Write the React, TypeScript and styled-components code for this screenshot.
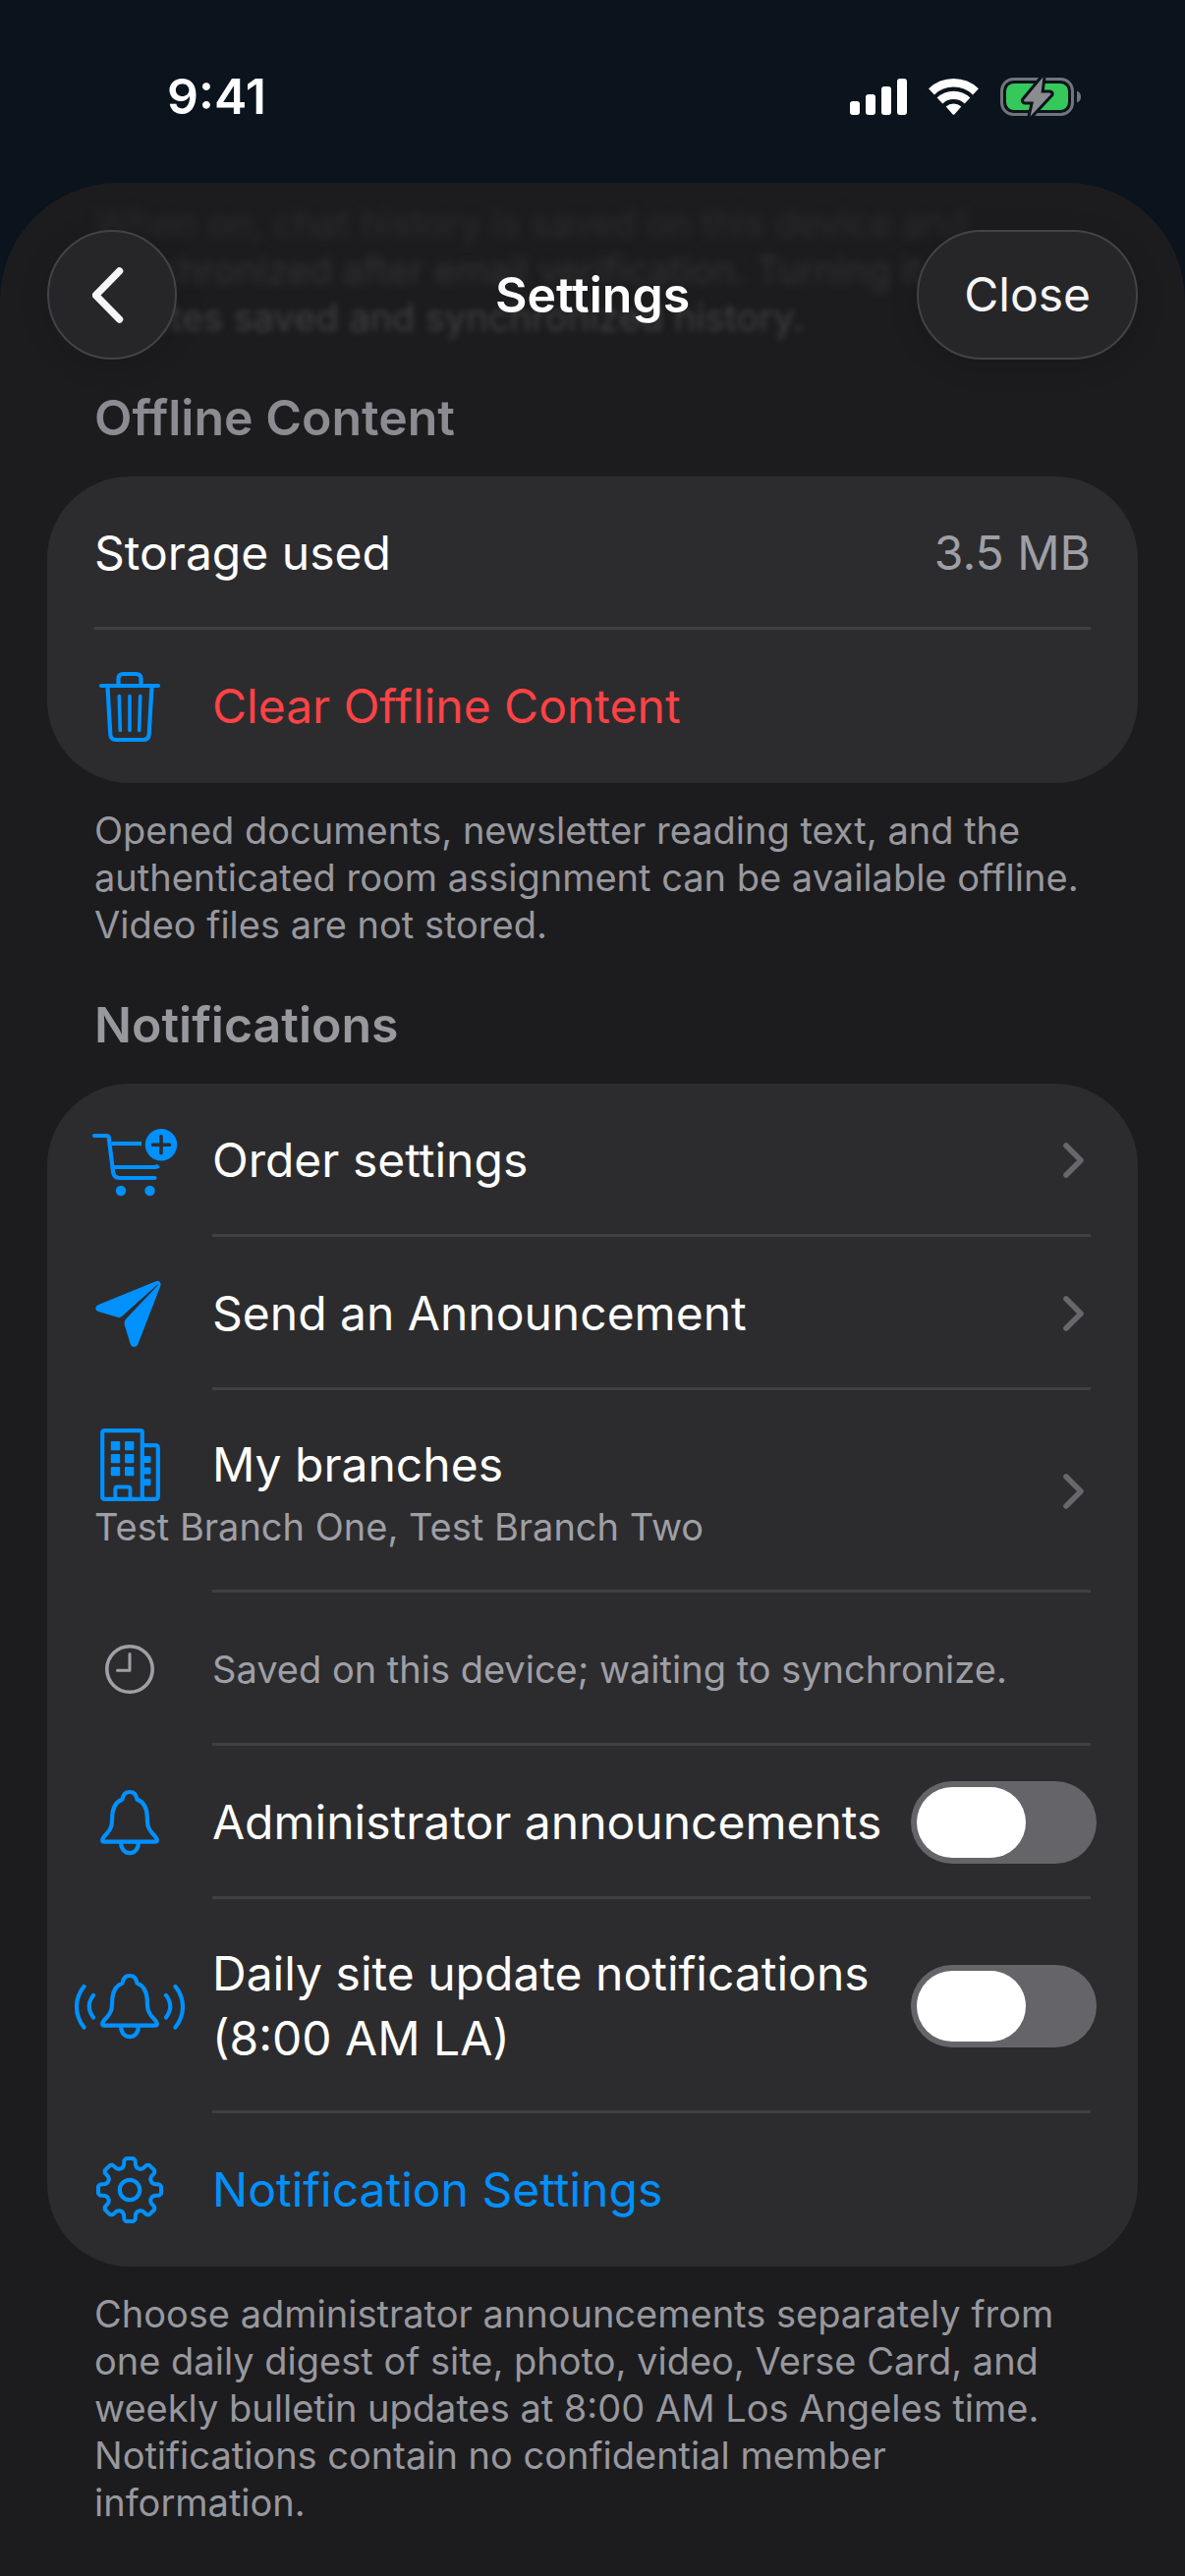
import React, { useId, useState } from "react";
import styled, { createGlobalStyle, css } from "styled-components";

const color = {
  backdrop: "#0b131c",
  sheet: "#1c1c1e",
  card: "#2c2c2e",
  separator: "#404042",
  text: "#ffffff",
  secondary: "#9f9fa6",
  footnote: "#98989f",
  headingFaded: "#8b8b91",
  blue: "#0091ff",
  red: "#ff4245",
  chevron: "#68686c",
  track: "#656569",
};

const GlobalStyle = createGlobalStyle`
  * { box-sizing: border-box; }
  html { background: ${color.sheet}; }
  body {
    margin: 0;
    color: ${color.text};
    font-family: Inter, "Liberation Sans", sans-serif;
    font-size: 48px;
    line-height: 66px;
  }
  button { margin: 0; border: 0; background: none; color: inherit; font: inherit; }
  h1, h2, p { margin: 0; }
`;

const Screen = styled.div`
  display: flex;
  flex-direction: column;
  min-height: 100vh;
  background: ${color.backdrop};
`;

const StatusBar = styled.div`
  display: flex;
  align-items: center;
  justify-content: space-between;
  height: 186px;
  padding: 9px 106px 0 170px;
`;

const Clock = styled.time`
  font-size: 50px;
  font-weight: 600;
`;

const Sheet = styled.main`
  position: relative;
  flex: 1;
  padding: 17px 48px 48px;
  border-radius: 120px 120px 0 0;
  background: ${color.sheet};
`;

const NavBar = styled.header`
  position: absolute;
  inset: 48px 48px auto;
  display: grid;
  grid-template-columns: 1fr auto 1fr;
  align-items: center;
`;

const Title = styled.h1`
  font-size: 50px;
  font-weight: 600;
`;

const GlassButton = styled.button<{ $end?: boolean }>`
  display: flex;
  align-items: center;
  justify-content: center;
  justify-self: ${(p) => (p.$end ? "end" : "start")};
  height: 132px;
  min-width: 132px;
  padding: ${(p) => (p.$end ? "0 46px" : "0")};
  border: 2px solid #434347;
  border-radius: 66px;
  background: rgba(39, 39, 42, 0.96);
  box-shadow: 0 6px 30px rgba(0, 0, 0, 0.14);
  color: #f5f5f7;
`;

const Footnote = styled.p`
  padding: 24px 48px 0;
  color: ${color.footnote};
  font-size: 38px;
  line-height: 48px;
`;

const ScrolledNote = styled.p`
  padding: 0 48px;
  font-size: 38px;
  line-height: 48px;
`;

const FadedLine = styled.span<{ $blur: number; $tint: string }>`
  display: block;
  color: ${(p) => p.$tint};
  filter: blur(${(p) => p.$blur}px);
`;

const Section = styled.section`
  padding-top: 45px;
`;

const Heading = styled.h2<{ $faded?: boolean }>`
  padding: 0 48px 27px;
  color: ${(p) => (p.$faded ? color.headingFaded : color.footnote)};
  font-size: 50px;
  font-weight: 600;
`;

const Card = styled.div`
  border-radius: 84px;
  background: ${color.card};
`;

const rowStyle = css`
  display: flex;
  align-items: center;
  gap: 18px;
  width: 100%;
  min-height: 156px;
  padding: 43px 48px;
  text-align: left;
`;

const Row = styled.div`
  ${rowStyle}
`;

const RowButton = styled.button`
  ${rowStyle}
`;

const Separator = styled.hr<{ $full?: boolean }>`
  height: 3px;
  margin: -3px 48px 0 ${(p) => (p.$full ? "48px" : "168px")};
  border: 0;
  background: ${color.separator};
`;

const Stack = styled.span`
  display: flex;
  flex: 1;
  flex-direction: column;
  gap: 6px;
`;

const Lead = styled.span`
  display: flex;
  flex: 1;
  align-items: center;
  gap: 48px;
`;

const IconSlot = styled.span`
  display: flex;
  flex: none;
  align-items: center;
  justify-content: center;
  width: 72px;
  height: 66px;

  svg { flex: none; overflow: visible; }
`;

const Label = styled.span<{ $tint?: string }>`
  flex: 1;
  color: ${(p) => p.$tint ?? color.text};
`;

const SwitchLabel = styled.label`
  flex: 1;
`;

const Value = styled.span`
  color: ${color.secondary};
`;

const Caption = styled.span`
  flex: 1;
  color: ${color.secondary};
  font-size: 38px;
  line-height: 48px;
`;

const Switch = styled.input`
  appearance: none;
  flex: none;
  width: 189px;
  height: 84px;
  margin: -9px -6px -9px 0;
  padding: 6px;
  border-radius: 42px;
  background: ${color.track};

  &::before {
    content: "";
    display: block;
    width: 111px;
    height: 72px;
    border-radius: 36px;
    background: #ffffff;
  }

  &:checked { background: #30d158; }
  &:checked::before { margin-left: auto; }
`;

const Glyph = ({ children, tint = color.blue }: { children: React.ReactNode; tint?: string }) => (
  <svg width="72" height="84" viewBox="0 0 72 84" fill="none" stroke={tint} strokeWidth="4.2"
    strokeLinecap="round" strokeLinejoin="round" aria-hidden="true">
    {children}
  </svg>
);

const TrashIcon = () => (
  <Glyph>
    <path d="M7 21H65" />
    <path d="M24.5 20V14Q24.5 9 29.500 9H42.500Q47.500 9 47.500 14V20" />
    <path d="M13.500 22L16.300 70.500Q16.700 76 22 76H50Q55.300 76 55.700 70.500L58.500 22" />
    <path d="M25.300 31.500L26.300 66.500M36 31.500V66.500M46.700 31.500L45.700 66.500" strokeWidth="3.600" />
  </Glyph>
);

const CartIcon = () => (
  <Glyph>
    <path d="M0 17H12.500Q14.500 17 14.800 19L19 53.500Q19.700 60 25.500 60H61.500" />
    <path d="M17.500 25H48" strokeLinecap="butt" />
    <path d="M20 49H60Q64 49 65.500 47.500" strokeLinecap="butt" />
    <circle cx="27" cy="73" r="5.200" fill={color.blue} stroke="none" />
    <circle cx="56.500" cy="73" r="5.200" fill={color.blue} stroke="none" />
    <circle cx="68" cy="26.300" r="16.200" fill={color.blue} stroke="none" />
    <path d="M59.500 26.300H76.500M68 17.800V34.800" stroke={color.card} strokeWidth="3.600" />
  </Glyph>
);

const PlaneIcon = () => (
  <Glyph>
    <g fill={color.blue} stroke="none">
      <path d="M62.500 9.300L4.200 33Q1.200 34.300 1.200 36.700Q1.200 39 4.200 40L23.500 45.700Q26.500 46.600 28.800 44.300L64.500 12.300Q65.500 11.500 64.800 13L32 47.800Q29.800 50.300 30.600 53L36.700 73Q37.800 76 40.400 76Q43.200 76 44.500 73L67.300 14Q68.300 11 66.500 9.500Q65 8.300 62.500 9.300Z" />
    </g>
  </Glyph>
);

const BuildingIcon = () => (
  <Glyph>
    <rect x="8.200" y="7.200" width="40.600" height="69.600" rx="2" />
    <path d="M49 22.200H62Q64.800 22.200 64.800 25V74Q64.800 76.800 62 76.800H49" />
    <path d="M21.300 76V66.500Q21.300 64.500 23.300 64.500H34.500Q36.500 64.500 36.500 66.500V76" strokeWidth="3.800" />
    <g fill={color.blue} stroke="none">
      {[18, 31, 44].map((y) => (
        <React.Fragment key={y}>
          <rect x="16.800" y={y} width="9.400" height="9.200" rx="1" />
          <rect x="31" y={y} width="9.400" height="9.200" rx="1" />
        </React.Fragment>
      ))}
      {[33, 44.6, 56.2].map((y) => (
        <rect key={y} x="50" y={y} width="7.500" height="7" rx="1" />
      ))}
    </g>
  </Glyph>
);

const ClockIcon = () => (
  <Glyph tint={color.secondary}>
    <circle cx="36" cy="42" r="23.200" strokeWidth="3.600" />
    <path d="M36 26.500V43.200H23.500" strokeWidth="3" />
  </Glyph>
);

const BellShape = () => (
  <>
    <path d="M36 11C31.500 11 29.200 14 28.500 18.500C21 21.500 18.500 28 18.200 36C18 45 17.500 48 13 53C10.500 55.500 8.200 58 8.200 60Q8.200 61.700 10 61.700H62Q63.800 61.700 63.800 60C63.800 58 61.500 55.500 59 53C54.500 48 54 45 53.800 36C53.500 28 51 21.500 43.500 18.500C42.800 14 40.500 11 36 11Z" />
    <path d="M27.200 63C27.200 69 31 73.200 36 73.200C41 73.200 44.800 69 44.800 63" strokeLinecap="butt" />
  </>
);

const BellIcon = () => (
  <Glyph>
    <BellShape />
  </Glyph>
);

const RingingBellIcon = () => (
  <Glyph>
    <BellShape />
    <path d="M-1 31C-6.500 38 -6.500 46 -1 53.500M-10.500 22C-20.500 34 -20.500 51 -10.500 63.500" />
    <path d="M73 31C78.500 38 78.500 46 73 53.500M82.500 22C92.500 34 92.500 51 82.500 63.500" />
  </Glyph>
);

const gearOutline = Array.from({ length: 8 }, (_, tooth) =>
  [[-18.5, 23.6], [-13.5, 25.6], [-10.5, 30.6], [-6.5, 32.2], [6.5, 32.2], [10.5, 30.6], [13.5, 25.6], [18.5, 23.6]].map(([turn, radius]) => {
    const angle = ((tooth * 45 + turn) * Math.PI) / 180;
    return `${(36 + radius * Math.sin(angle)).toFixed(1)} ${(42 - radius * Math.cos(angle)).toFixed(1)}`;
  }),
).flat();

const GearIcon = () => (
  <Glyph>
    <path d={`M${gearOutline.join("L")}Z`} strokeWidth="4" />
    <circle cx="36" cy="42" r="10.200" />
  </Glyph>
);

const Chevron = () => (
  <svg width="28" height="36" viewBox="0 0 28 36" fill="none" stroke={color.chevron}
    strokeWidth="5.600" strokeLinecap="round" strokeLinejoin="round" aria-hidden="true">
    <path d="M3 3L18 18L3 33" />
  </svg>
);

const BackIcon = () => (
  <svg width="40" height="60" viewBox="0 0 40 60" fill="none" stroke="currentColor"
    strokeWidth="7.500" strokeLinecap="round" strokeLinejoin="round" aria-hidden="true">
    <path d="M27.500 6L3.500 30.500L27.500 55" />
  </svg>
);

const StatusIcons = () => (
  <svg width="236" height="44" viewBox="0 0 236 44" fill="#fff" role="img" aria-label="Signal, Wi-Fi, charging">
    <rect x="1" y="27" width="10" height="14" rx="3" />
    <rect x="17" y="20" width="10" height="21" rx="3" />
    <rect x="33" y="12" width="10" height="29" rx="3" />
    <rect x="49" y="4" width="10" height="37" rx="3" />
    <g fill="none" stroke="#fff">
      <path d="M84 17.300A32.700 32.700 0 0 1 129 17.300" strokeWidth="8.500" />
      <path d="M92.500 26.500A20.200 20.200 0 0 1 120.500 26.500" strokeWidth="8.200" />
    </g>
    <path d="M98.700 32.500A11.700 11.700 0 0 1 114.300 32.500L107.500 40.300Q106.500 41.300 105.500 40.300Z" />
    <rect x="155.500" y="4.500" width="72" height="36" rx="12" fill="none" stroke="#717579" strokeWidth="3" />
    <path d="M232 16.500Q236 18 236 22.500Q236 27 232 28.500Z" fill="#717579" />
    <rect x="160" y="9" width="63" height="27" rx="8" fill="#35c95b" />
    <path d="M197.500 2.500L178 26Q177.500 27.500 179.500 27.500H188L184.500 42.500L205.500 20Q206 18.500 204 18.500H195.500Z"
      fill="#8a8c90" stroke={color.backdrop} strokeWidth="6" strokeLinejoin="round" paintOrder="stroke" />
  </svg>
);

const LinkRow = ({ icon, children }: { icon: React.ReactNode; children: React.ReactNode }) => (
  <RowButton type="button">
    <Lead>
      <IconSlot>{icon}</IconSlot>
      <Label>{children}</Label>
    </Lead>
    <Chevron />
  </RowButton>
);

const SwitchRow = ({ icon, children }: { icon: React.ReactNode; children: React.ReactNode }) => {
  const id = useId();
  const [on, setOn] = useState(false);
  return (
    <Row>
      <Lead>
        <IconSlot>{icon}</IconSlot>
        <SwitchLabel htmlFor={id}>{children}</SwitchLabel>
      </Lead>
      <Switch id={id} type="checkbox" role="switch" checked={on} onChange={(e) => setOn(e.target.checked)} />
    </Row>
  );
};

export default function App() {
  return (
    <>
      <GlobalStyle />
      <Screen>
        <StatusBar>
          <Clock>9:41</Clock>
          <StatusIcons />
        </StatusBar>
        <Sheet>
          <ScrolledNote>
            <FadedLine $blur={5} $tint="#2b2b2d">When on, chat history is saved on this device and</FadedLine>
            <FadedLine $blur={4} $tint="#323234">synchronized after email verification. Turning it off</FadedLine>
            <FadedLine $blur={3} $tint="#404043">deletes saved and synchronized history.</FadedLine>
          </ScrolledNote>
          <NavBar>
            <GlassButton type="button" aria-label="Back">
              <BackIcon />
            </GlassButton>
            <Title>Settings</Title>
            <GlassButton type="button" $end>Close</GlassButton>
          </NavBar>

          <Section>
            <Heading $faded>Offline Content</Heading>
            <Card>
              <Row>
                <Label>Storage used</Label>
                <Value>3.5 MB</Value>
              </Row>
              <Separator $full />
              <RowButton type="button">
                <Lead>
                  <IconSlot><TrashIcon /></IconSlot>
                  <Label $tint={color.red}>Clear Offline Content</Label>
                </Lead>
              </RowButton>
            </Card>
            <Footnote>
              Opened documents, newsletter reading text, and the authenticated room assignment can be available
              offline. Video files are not stored.
            </Footnote>
          </Section>

          <Section>
            <Heading>Notifications</Heading>
            <Card>
              <LinkRow icon={<CartIcon />}>Order settings</LinkRow>
              <Separator />
              <LinkRow icon={<PlaneIcon />}>Send an Announcement</LinkRow>
              <Separator />
              <RowButton type="button">
                <Stack>
                  <Lead>
                    <IconSlot><BuildingIcon /></IconSlot>
                    <Label>My branches</Label>
                  </Lead>
                  <Caption>Test Branch One, Test Branch Two</Caption>
                </Stack>
                <Chevron />
              </RowButton>
              <Separator />
              <Row>
                <Lead>
                  <IconSlot><ClockIcon /></IconSlot>
                  <Caption>Saved on this device; waiting to synchronize.</Caption>
                </Lead>
              </Row>
              <Separator />
              <SwitchRow icon={<BellIcon />}>Administrator announcements</SwitchRow>
              <Separator />
              <SwitchRow icon={<RingingBellIcon />}>Daily site update notifications (8:00 AM LA)</SwitchRow>
              <Separator />
              <RowButton type="button">
                <Lead>
                  <IconSlot><GearIcon /></IconSlot>
                  <Label $tint={color.blue}>Notification Settings</Label>
                </Lead>
              </RowButton>
            </Card>
            <Footnote>
              Choose administrator announcements separately from one daily digest of site, photo, video, Verse
              Card, and weekly bulletin updates at 8:00 AM Los Angeles time. Notifications contain no confidential
              member information.
            </Footnote>
          </Section>
        </Sheet>
      </Screen>
    </>
  );
}
